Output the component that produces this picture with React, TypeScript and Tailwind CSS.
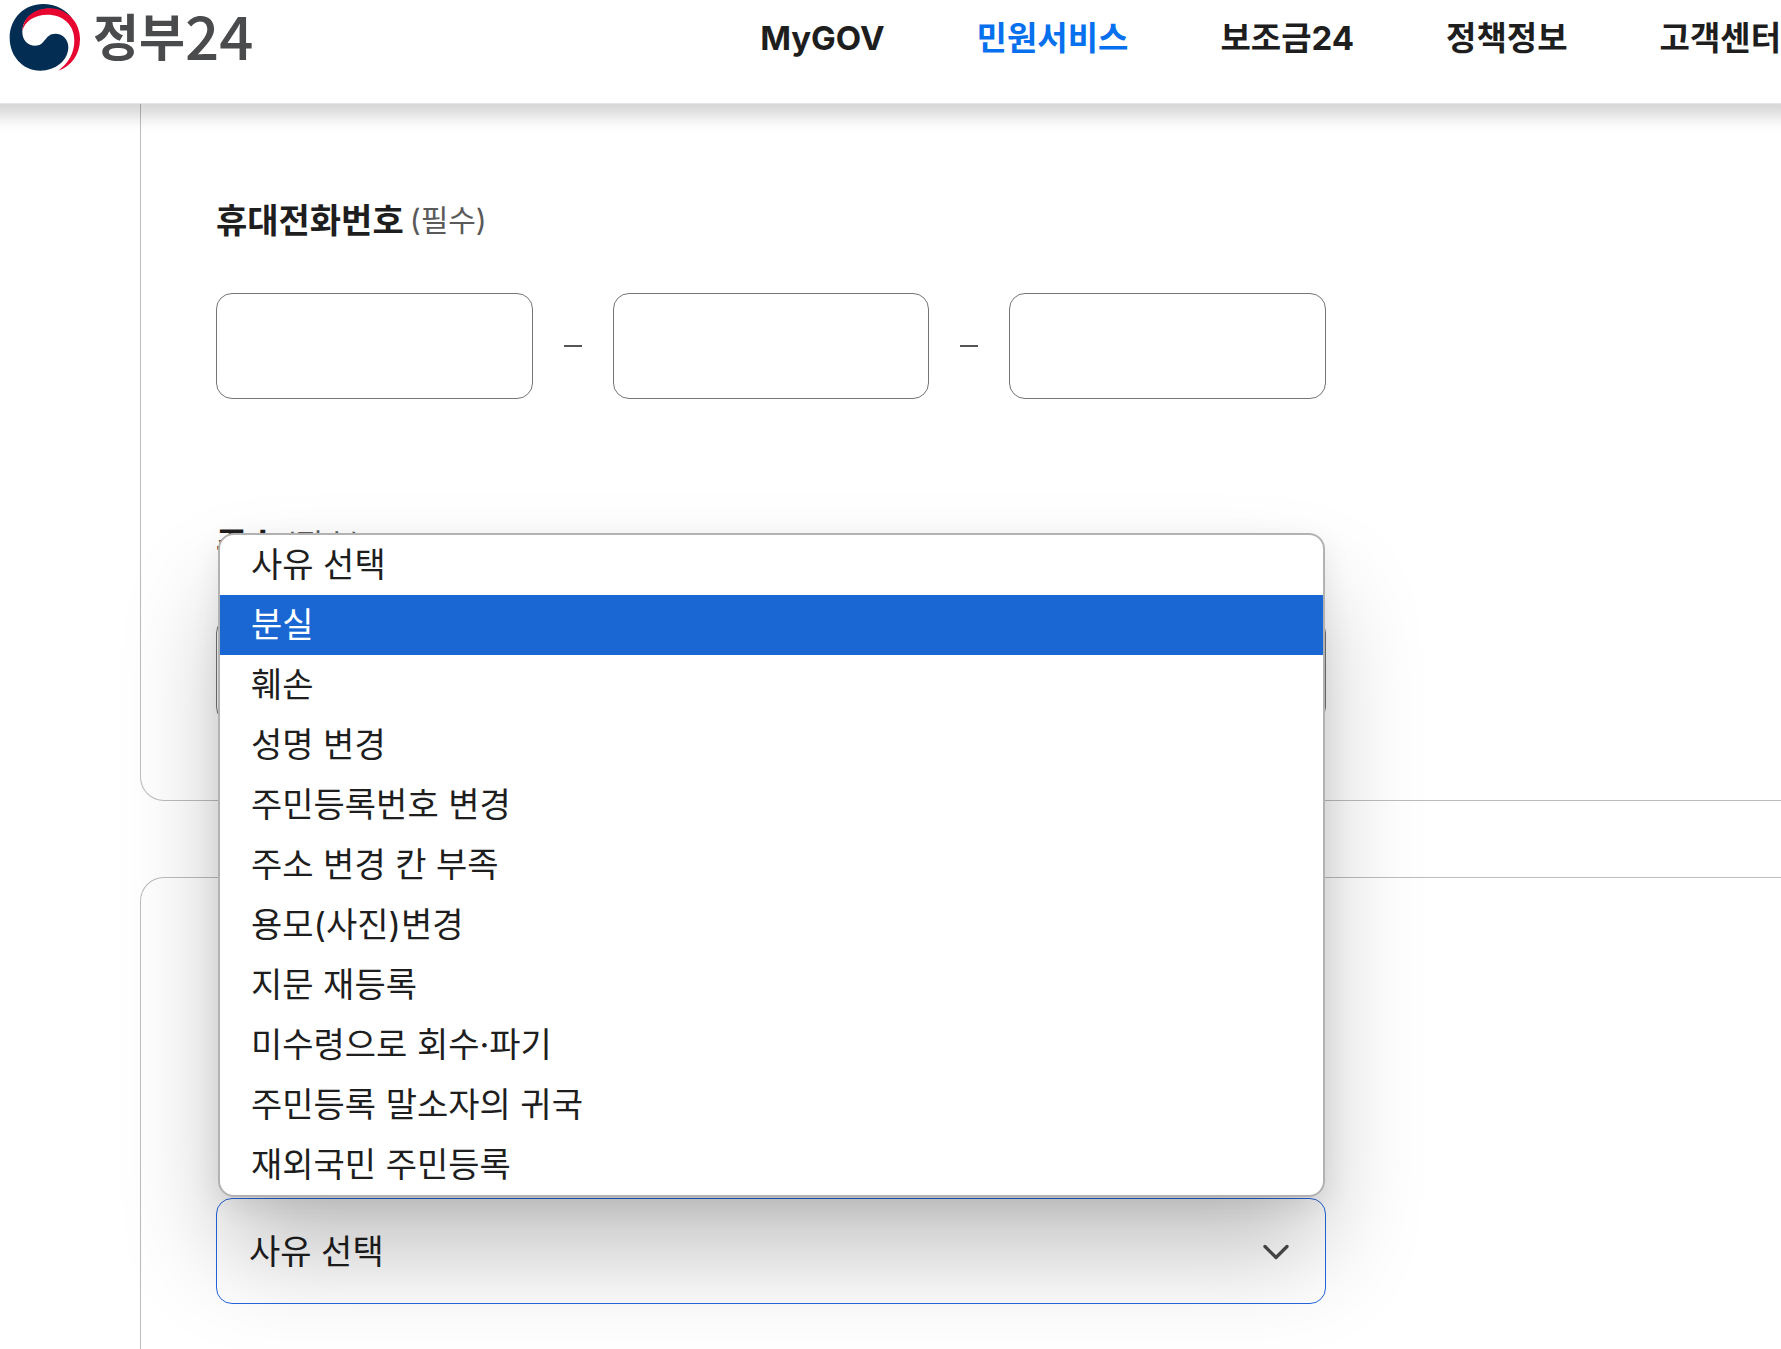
import { ChevronDown } from "lucide-react";

const NAV_ITEMS = [
  { label: "MyGOV", active: false },
  { label: "민원서비스", active: true },
  { label: "보조금24", active: false },
  { label: "정책정보", active: false },
  { label: "고객센터", active: false },
];

const REASONS = [
  "사유 선택",
  "분실",
  "훼손",
  "성명 변경",
  "주민등록번호 변경",
  "주소 변경 칸 부족",
  "용모(사진)변경",
  "지문 재등록",
  "미수령으로 회수·파기",
  "주민등록 말소자의 귀국",
  "재외국민 주민등록",
];

const HIGHLIGHTED = "분실";

const inputClass =
  "h-[106px] w-full min-w-0 rounded-2xl border border-[#757575] bg-white px-8 text-[34px] outline-none";

function Logo() {
  return (
    <a
      href="#"
      className="flex shrink-0 items-start font-['Noto_Sans_CJK_KR',sans-serif] text-[#4a4b4d]"
    >
      <svg viewBox="28 13 216 204" className="h-[68px] w-[72px]" aria-hidden="true">
        <path
          fill="#032d53"
          d="M122 213C68 213 30 168 30 115C30 55 75 13 130 13C168 13 200 30 219 58C200 38 175 27 150 27C105 27 68 55 68 97C68 122 85 138 106 138C138 138 135 102 167 102C190 102 206 120 206 142C206 182 168 213 122 213Z"
        />
        <path
          fill="#e60630"
          d="M68 95C70 52 105 26 150 26C200 26 241 66 241 118C241 165 215 200 176 213C207 190 224 160 224 122C224 75 190 45 143 45C105 45 74 65 68 95Z"
        />
      </svg>
      <span className="ml-3 flex items-center leading-[60px]">
        <span className="text-[50px] font-bold">정부</span>
        <span className="text-[60px] font-medium">24</span>
      </span>
    </a>
  );
}

function Header() {
  return (
    <header className="relative z-20 flex h-[104px] items-start justify-between border-b border-[#e4e5ec] bg-white pl-[9px] pt-1 shadow-[0_-4px_16px_16px_rgba(0,0,0,0.17)]">
      <Logo />
      <nav className="flex shrink-0 gap-[92px]">
        {NAV_ITEMS.map((item) => (
          <a
            key={item.label}
            href="#"
            className={`text-[33px] font-bold leading-[68px] ${
              item.active ? "text-[#0670ee]" : "text-[#1e1e1e]"
            }`}
          >
            {item.label}
          </a>
        ))}
      </nav>
    </header>
  );
}

function FieldTitle({ children }: { children: string }) {
  return (
    <span className="flex h-12 items-center gap-1.5">
      <span className="text-[34px] font-bold text-[#1e1e1e]">{children}</span>
      <span className="text-[30px] text-[#5a5a5a]">(필수)</span>
    </span>
  );
}

function Dash() {
  return (
    <span className="flex w-20 shrink-0 justify-center" aria-hidden="true">
      <span className="h-0.5 w-[18px] bg-[#555]" />
    </span>
  );
}

function ReasonSelect() {
  return (
    <div className="relative max-w-[1110px]">
      <select
        aria-label="사유 선택"
        defaultValue="사유 선택"
        className="block h-[106px] w-full appearance-none rounded-2xl border border-[#2467e0] bg-white px-8 text-[34px] text-[#1e1e1e] outline-none"
      >
        {REASONS.map((reason) => (
          <option key={reason}>{reason}</option>
        ))}
      </select>
      <ChevronDown
        size={44}
        strokeWidth={1.8}
        className="pointer-events-none absolute right-7 top-8 text-[#4a4a4a]"
        aria-hidden="true"
      />
      {/* open list, drops upwards over the cards */}
      <ul
        role="listbox"
        className="pointer-events-none absolute bottom-full left-0.5 right-px mb-px overflow-hidden rounded-2xl border-2 border-[#b2b2b2] bg-white shadow-[0_8px_28px_rgba(0,0,0,0.08),0_60px_100px_-6px_rgba(0,0,0,0.25)]"
      >
        {REASONS.map((reason) => (
          <li
            key={reason}
            role="option"
            aria-selected={reason === HIGHLIGHTED}
            className={`px-[31px] text-[34px] leading-[60px] ${
              reason === HIGHLIGHTED ? "bg-[#1a67d4] text-white" : "text-[#1e1e1e]"
            }`}
          >
            {reason}
          </li>
        ))}
      </ul>
    </div>
  );
}

export default function App() {
  return (
    <div className="flex min-h-screen flex-col overflow-x-hidden bg-white font-['Inter','Noto_Sans_CJK_KR',sans-serif]">
      <Header />
      <main className="flex flex-1 flex-col gap-[76px] pl-[140px]">
        <section className="rounded-bl-3xl border-b border-l border-[#bcbcbc] pb-[77px] pl-[75px] pt-[92px]">
          <fieldset className="max-w-[1110px]">
            <legend className="mb-[49px]">
              <FieldTitle>휴대전화번호</FieldTitle>
            </legend>
            <div className="flex items-center">
              <input type="tel" aria-label="휴대전화번호" className={inputClass} />
              <Dash />
              <input type="tel" aria-label="휴대전화번호" className={inputClass} />
              <Dash />
              <input type="tel" aria-label="휴대전화번호" className={inputClass} />
            </div>
          </fieldset>
          <div className="mt-[121px] max-w-[1110px]">
            <label htmlFor="address" className="mb-[49px] block">
              <FieldTitle>주소</FieldTitle>
            </label>
            <input id="address" type="text" className={`block ${inputClass}`} />
          </div>
        </section>
        <section className="flex-1 rounded-tl-3xl border-l border-t border-[#bcbcbc] pl-[75px] pt-[320px]">
          <ReasonSelect />
        </section>
      </main>
    </div>
  );
}
